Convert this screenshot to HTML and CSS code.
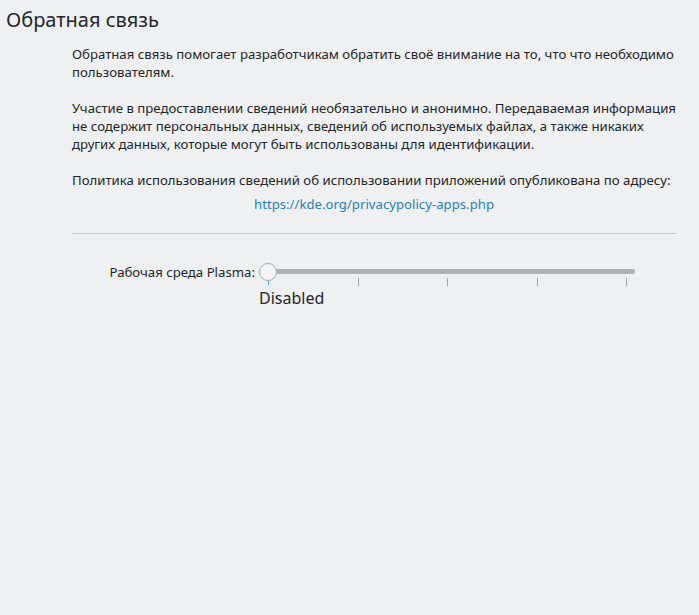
FILE: index.html
```html
<!DOCTYPE html>
<html lang="ru">
<head>
<meta charset="utf-8">
<link rel="stylesheet" href="styles.css">
</head>
<body>
<div class="page">
  <h1 class="title">Обратная связь</h1>
  <div class="content">
    <p class="para">Обратная связь помогает разработчикам обратить своё внимание на то, что что необходимо пользователям.</p>
    <p class="para">Участие в предоставлении сведений необязательно и анонимно. Передаваемая информация не содержит персональных данных, сведений об используемых файлах, а также никаких других данных, которые могут быть использованы для идентификации.</p>
    <p class="para policy">Политика использования сведений об использовании приложений опубликована по адресу:</p>
    <div class="link-row"><a class="link" href="#">https://kde.org/privacypolicy-apps.php</a></div>
    <hr class="sep">
    <div class="slider-row">
      <div class="label">Рабочая среда Plasma:</div>
      <div class="slider-col">
        <div class="slider">
          <div class="track"></div>
          <div class="handle"></div>
          <div class="ticks">
            <span class="tick first"></span>
            <span class="tick"></span>
            <span class="tick"></span>
            <span class="tick"></span>
            <span class="tick"></span>
          </div>
        </div>
        <div class="value">Disabled</div>
      </div>
    </div>
  </div>
</div>
</body>
</html>
```
FILE: styles.css
```css
html, body {
  margin: 0;
  padding: 0;
  background: #eff0f1;
}
body {
  font-family: "Noto Sans", "Open Sans", sans-serif;
  color: #232629;
  width: 699px;
  height: 615px;
  overflow: hidden;
}
.page {
  padding: 6px 0 0 6px;
}
.title {
  margin: 0;
  font-size: 20px;
  font-weight: 400;
  line-height: 27px;
}
.content {
  margin: 12px 23px 0 66px;
  font-size: 13.2px;
  line-height: 18px;
}
.para {
  margin: 0 0 18px 0;
}
.para.policy {
  margin-bottom: 6px;
}
.link-row {
  text-align: center;
  line-height: 18px;
}
.link {
  color: #2980b9;
  text-decoration: none;
}
.sep {
  margin: 20px 0 0 0;
  border: 0;
  border-top: 1px solid #c5c6c8;
  height: 0;
}
.slider-row {
  display: flex;
  align-items: flex-start;
  margin-top: 27px;
}
.label {
  width: 183px;
  text-align: right;
  font-size: 13.2px;
  line-height: 18px;
  padding-top: 2px;
}
.slider-col {
  display: flex;
  flex-direction: column;
  margin-left: 4px;
}
.slider {
  position: relative;
  width: 376px;
  height: 25px;
}
.track {
  position: absolute;
  left: 9px;
  right: 0;
  top: 8px;
  height: 5px;
  border-radius: 3px;
  background: #b1b1b2;
}
.handle {
  position: absolute;
  left: 0;
  top: 2px;
  width: 16px;
  height: 16px;
  border-radius: 50%;
  border: 1px solid #a8a9aa;
  background: #f5f5f6;
}
.ticks {
  position: absolute;
  left: 9px;
  width: 359px;
  top: 17px;
  display: flex;
  justify-content: space-between;
}
.tick {
  width: 1px;
  height: 8px;
  background: #a0a1a2;
}
.tick.first {
  background: #3daee9;
  height: 4px;
  margin-top: 3px;
}
.value {
  font-size: 16px;
  line-height: 22px;
  margin-top: 1px;
}
```
